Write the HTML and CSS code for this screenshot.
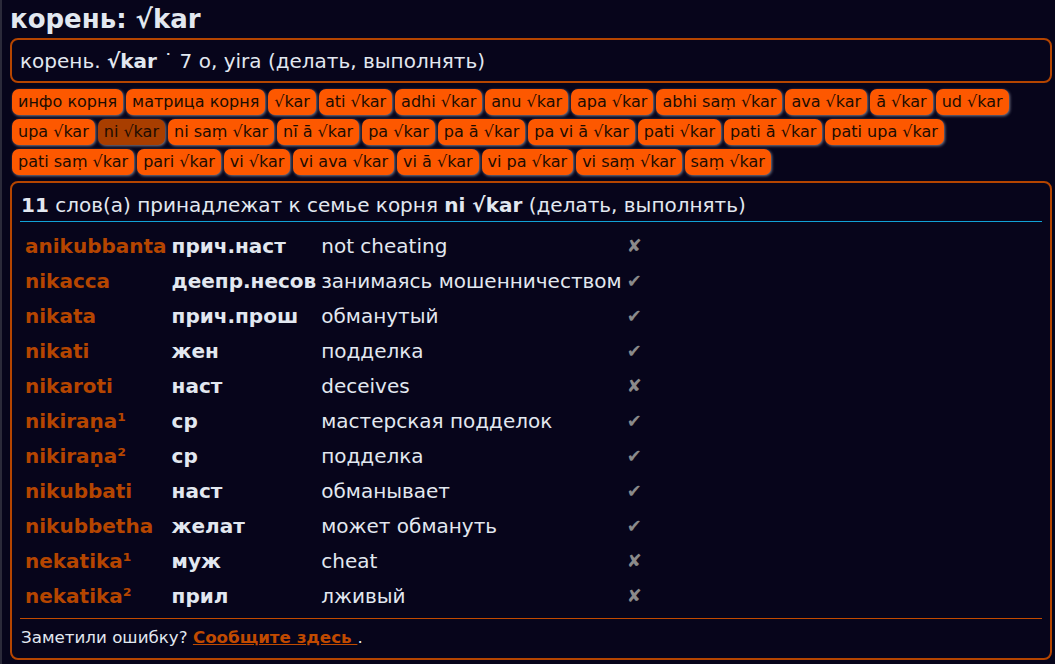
FILE: index.html
```html
<!DOCTYPE html>
<html lang="ru">
<head>
<meta charset="utf-8">
<link rel="stylesheet" href="styles.css">
</head>
<body>
<div class="page">
  <h1 class="title">корень: √kar</h1>
  <div class="box summary">корень. <b>√kar</b> ˙ 7 o, yira (делать, выполнять)</div>
  <div class="buttons">
    <span class="btn">инфо корня</span>
    <span class="btn">матрица корня</span>
    <span class="btn">√kar</span>
    <span class="btn">ati √kar</span>
    <span class="btn">adhi √kar</span>
    <span class="btn">anu √kar</span>
    <span class="btn">apa √kar</span>
    <span class="btn">abhi saṃ √kar</span>
    <span class="btn">ava √kar</span>
    <span class="btn">ā √kar</span>
    <span class="btn">ud √kar</span>
    <span class="btn">upa √kar</span>
    <span class="btn active">ni √kar</span>
    <span class="btn">ni saṃ √kar</span>
    <span class="btn">nī ā √kar</span>
    <span class="btn">pa √kar</span>
    <span class="btn">pa ā √kar</span>
    <span class="btn">pa vi ā √kar</span>
    <span class="btn">pati √kar</span>
    <span class="btn">pati ā √kar</span>
    <span class="btn">pati upa √kar</span>
    <span class="btn">pati saṃ √kar</span>
    <span class="btn">pari √kar</span>
    <span class="btn">vi √kar</span>
    <span class="btn">vi ava √kar</span>
    <span class="btn">vi ā √kar</span>
    <span class="btn">vi pa √kar</span>
    <span class="btn">vi saṃ √kar</span>
    <span class="btn">saṃ √kar</span>
  </div>
  <div class="box family">
    <div class="family-head"><b>11</b> слов(а) принадлежат к семье корня <b>ni √kar</b> (делать, выполнять)</div>
    <table class="words">
      <tr><td class="pali">anikubbanta</td><td class="pos">прич.наст</td><td class="mean">not cheating</td><td class="mark">✘</td></tr>
      <tr><td class="pali">nikacca</td><td class="pos">деепр.несов</td><td class="mean">занимаясь мошенничеством</td><td class="mark">✔</td></tr>
      <tr><td class="pali">nikata</td><td class="pos">прич.прош</td><td class="mean">обманутый</td><td class="mark">✔</td></tr>
      <tr><td class="pali">nikati</td><td class="pos">жен</td><td class="mean">подделка</td><td class="mark">✔</td></tr>
      <tr><td class="pali">nikaroti</td><td class="pos">наст</td><td class="mean">deceives</td><td class="mark">✘</td></tr>
      <tr><td class="pali">nikiraṇa¹</td><td class="pos">ср</td><td class="mean">мастерская подделок</td><td class="mark">✔</td></tr>
      <tr><td class="pali">nikiraṇa²</td><td class="pos">ср</td><td class="mean">подделка</td><td class="mark">✔</td></tr>
      <tr><td class="pali">nikubbati</td><td class="pos">наст</td><td class="mean">обманывает</td><td class="mark">✔</td></tr>
      <tr><td class="pali">nikubbetha</td><td class="pos">желат</td><td class="mean">может обмануть</td><td class="mark">✔</td></tr>
      <tr><td class="pali">nekatika¹</td><td class="pos">муж</td><td class="mean">cheat</td><td class="mark">✘</td></tr>
      <tr><td class="pali">nekatika²</td><td class="pos">прил</td><td class="mean">лживый</td><td class="mark">✘</td></tr>
    </table>
    <div class="footer">Заметили ошибку? <a class="report" href="#">Сообщите здесь </a>.</div>
  </div>
</div>
</body>
</html>
```

FILE: styles.css
```css
html, body {
  margin: 0;
  padding: 0;
  background: #07051b;
}
body {
  font-family: "DejaVu Sans", sans-serif;
  color: #e2e8f0;
  height: 664px;
  overflow: hidden;
}
.page {
  border-left: 2px solid #2b2a3a;
  padding: 0 3px 0 8px;
  height: 664px;
  box-sizing: border-box;
}
.title {
  margin: 0;
  padding-top: 3px;
  font-size: 26px;
  line-height: 32px;
  height: 35px;
  font-weight: bold;
}
.box {
  border: 2px solid #b54500;
  border-radius: 8px;
}
.summary {
  font-size: 20px;
  padding: 0 8px;
  height: 41px;
  line-height: 42px;
}
.buttons {
  display: flex;
  flex-wrap: wrap;
  gap: 4px 3px;
  padding: 6px 2px 6px 2px;
}
.btn {
  background: #fd5800;
  color: #1c0c02;
  font-size: 16px;
  line-height: 20px;
  padding: 3px 6px 3px 6px;
  border-radius: 7px;
  box-shadow: 1px 1px 3px #7a7a8a;
}
.btn.active {
  background: #a83e00;
}
.family {
  height: 475px;
  padding: 0 8px;
  display: flex;
  flex-direction: column;
}
.family-head {
  font-size: 20px;
  padding: 10px 0 0 1px;
  height: 28px;
  border-bottom: 1px solid #11a2d6;
}
.words {
  align-self: flex-start;
  border-collapse: collapse;
  font-size: 20px;
  margin-top: 6px;
}
.words td {
  height: 35px;
  padding: 0 5px 0 0;
  vertical-align: middle;
  white-space: nowrap;
}
.words td.pali {
  color: #b54500;
  font-weight: bold;
  padding-left: 5px;
}
.pos {
  font-weight: bold;
}
.mark {
  color: #8a8a8a;
  font-size: 18px;
}
.footer {
  margin-top: auto;
  border-top: 1px solid #c14a00;
  font-size: 16.7px;
  padding: 8px 1px 0;
  height: 31px;
}
.report {
  color: #c14a00;
  font-weight: bold;
  text-decoration: underline;
}
```
